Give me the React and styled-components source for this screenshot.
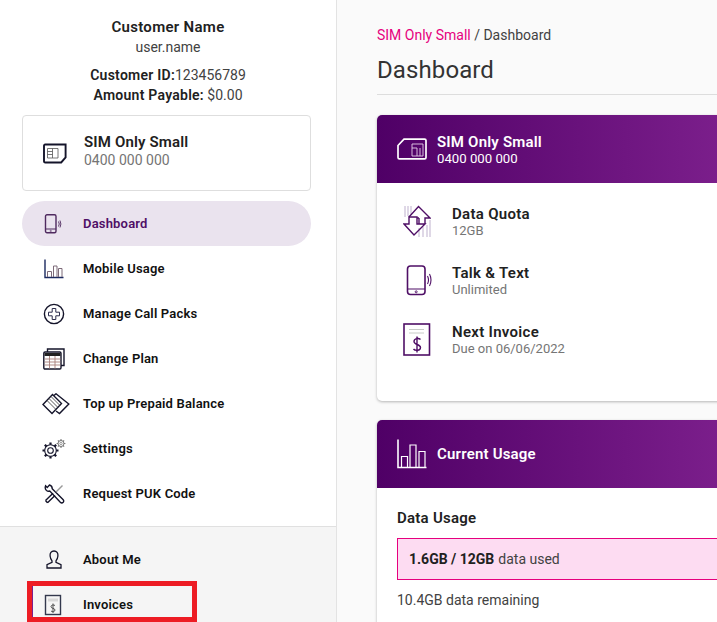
import React from "react";
import styled, { createGlobalStyle } from "styled-components";

const GlobalStyle = createGlobalStyle`
  html, body {
    margin: 0;
    padding: 0;
    height: 622px;
    overflow: hidden;
    background: #fafafa;
  }
  * {
    box-sizing: border-box;
  }
`;

const Page = styled.div`
  display: flex;
  width: 717px;
  height: 622px;
  overflow: hidden;
  position: relative;
  font-family: Roboto, "Liberation Sans", sans-serif;
  color: #212121;
`;

const Sidebar = styled.aside`
  width: 337px;
  flex-shrink: 0;
  height: 622px;
  display: flex;
  flex-direction: column;
  background: #fff;
  border-right: 1px solid #e3e3e3;
`;

const Profile = styled.div`
  flex-shrink: 0;
  padding-top: 18px;
  text-align: center;
`;

const CustomerName = styled.div`
  font-size: 15px;
  font-weight: 600;
  line-height: 18px;
  letter-spacing: 0.3px;
`;

const UserName = styled.div`
  font-size: 14px;
  line-height: 18px;
  margin-top: 2px;
  color: #424242;
`;

const Account = styled.div`
  margin-top: 9px;
  font-size: 14px;
  line-height: 20px;
  color: #424242;

  & b {
    font-weight: 600;
    letter-spacing: 0.25px;
    color: #212121;
  }
`;

const PlanCard = styled.div`
  flex-shrink: 0;
  margin: 10px 25px 0 22px;
  height: 76px;
  display: flex;
  align-items: center;
  gap: 17px;
  padding-left: 20px;
  border: 1px solid #dedede;
  border-radius: 4px;
`;

const PlanText = styled.div`
  margin-bottom: 5px;
`;

const PlanName = styled.div`
  font-size: 15px;
  font-weight: 600;
  line-height: 18px;
  letter-spacing: 0.15px;
`;

const PlanNumber = styled.div`
  margin-top: 1px;
  font-size: 14px;
  line-height: 16px;
  color: #757575;
`;

const Nav = styled.nav`
  flex-shrink: 0;
  display: flex;
  flex-direction: column;
  margin-top: 10px;
  padding: 0 25px 0 22px;
`;

const NavItem = styled.div`
  height: 45px;
  display: flex;
  align-items: center;
  padding-left: 20px;
  border-radius: 23px;
  font-size: 13px;
  font-weight: 600;
  letter-spacing: 0.18px;
  color: ${(p) => (p.$active ? "#4f0f66" : "#111")};
  background: ${(p) => (p.$active ? "#eae3ee" : "transparent")};
`;

const NavIcon = styled.span`
  width: 41px;
  height: 26px;
  flex-shrink: 0;
  display: flex;
  align-items: center;
  padding-left: ${(p) => p.$shift || 0}px;

  & svg {
    display: block;
    flex-shrink: 0;
  }
`;

const BottomNav = styled(Nav)`
  flex: 1;
  padding-top: 10px;
  background: #f5f5f5;
  border-top: 1px solid #e0e0e0;
`;

const Main = styled.main`
  flex: 1;
  min-width: 0;
  padding: 26px 0 0 40px;
  overflow: hidden;
`;

const Breadcrumb = styled.div`
  font-size: 14px;
  line-height: 18px;
  color: #424242;

  & span {
    color: #e6007e;
  }
`;

const PageTitle = styled.h1`
  margin: 10px -10px 0 0;
  padding-bottom: 8px;
  font-size: 24px;
  line-height: 32px;
  font-weight: 400;
  letter-spacing: 0.1px;
  color: #333;
  border-bottom: 1px solid #ddd;
`;

const Card = styled.section`
  flex-shrink: 0;
  margin: ${(p) => p.$top}px -10px 0 0;
  height: ${(p) => p.$height}px;
  background: #fff;
  border-radius: 5px;
  overflow: hidden;
  box-shadow: 0 1px 3px rgba(0, 0, 0, 0.28);
`;

const CardHeader = styled.header`
  height: 68px;
  display: flex;
  align-items: center;
  gap: 10px;
  padding-left: 20px;
  color: #fff;
  background: linear-gradient(90deg, #4f0066 0%, #7c1f8c 100%);
`;

const HeaderTitle = styled.div`
  font-size: 15px;
  font-weight: 600;
  line-height: 18px;
  letter-spacing: 0.2px;
`;

const HeaderSub = styled.div`
  font-size: 13.2px;
  line-height: 15px;
`;

const InfoList = styled.div`
  padding: 18px 0 0 25px;
  display: flex;
  flex-direction: column;
  gap: 19.25px;
`;

const InfoRow = styled.div`
  display: flex;
  align-items: center;
  gap: 20px;
  height: 40px;
`;

const InfoIcon = styled.span`
  width: 30px;
  flex-shrink: 0;
  display: flex;
  justify-content: center;
`;

const InfoTitle = styled.div`
  font-size: 15px;
  font-weight: 600;
  line-height: 19px;
  letter-spacing: 0.3px;
`;

const InfoSub = styled.div`
  font-size: 13px;
  line-height: 14px;
  color: #757575;
`;

const UsageBody = styled.div`
  padding: 20px 0 0 20px;
`;

const UsageTitle = styled.div`
  font-size: 15px;
  font-weight: 600;
  line-height: 20px;
  letter-spacing: 0.25px;
`;

const UsageBar = styled.div`
  margin-top: 10px;
  height: 42px;
  display: flex;
  align-items: center;
  padding-left: 11px;
  font-size: 14px;
  color: #424242;
  background: #fddcf2;
  border: 1px solid #e6007e;

  & b {
    font-weight: 700;
    color: #212121;
    margin-right: 4px;
  }
`;

const Remaining = styled.div`
  margin-top: 11px;
  font-size: 14px;
  line-height: 18px;
  color: #424242;
`;

const Highlight = styled.div`
  position: absolute;
  left: 27px;
  top: 581px;
  width: 170px;
  height: 41px;
  border: 5px solid #ed1c24;
  pointer-events: none;

  &::before {
    content: "";
    position: absolute;
    left: 0;
    top: 0;
    bottom: 0;
    width: 1px;
    background: #7c1f8c;
  }
`;

const Icon = ({ w, h, color = "#14142a", sw = 1.4, children }) => (
  <svg
    width={w}
    height={h}
    viewBox={`0 0 ${w} ${h}`}
    fill="none"
    stroke={color}
    strokeWidth={sw}
  >
    {children}
  </svg>
);

const SimIcon = () => (
  <Icon w={24} h={21}>
    <path d="M2.2 1.5H22.6V14.5L18.2 19.5H2.2Q1 19.5 1 18.3V2.7Q1 1.5 2.2 1.5Z" strokeWidth="1.9" />
    <path d="M4.5 5.5H15V15H4.5ZM4.5 8.5H9.5M4.5 11.5H9.5M9.5 5.5V15" strokeWidth=".8" stroke="#555" />
  </Icon>
);

const PhoneIcon = ({ color }) => (
  <Icon w={20} h={20} color={color}>
    <rect x="1.5" y=".8" width="10.5" height="18" rx="1.5" />
    <path d="M1.5 15H12" strokeWidth="1" />
    <circle cx="6.7" cy="17" r=".7" strokeWidth=".6" />
    <path d="M14.5 7.5Q16 10 14.5 12.5M16 6.5Q17.8 10 16 13.5" strokeWidth=".9" />
  </Icon>
);

const BarsIcon = () => (
  <Icon w={20} h={20} color="#1c2a60">
    <path d="M1 .5V18.5H19.5" />
    <path d="M3.5 18V12.5H7.5V18M9.5 18V7H13V18M14.5 18V9.5H18V18" stroke="#7d6a78" strokeWidth="1" />
  </Icon>
);

const PlusCircleIcon = () => (
  <Icon w={22} h={22}>
    <circle cx="11" cy="11" r="9.6" />
    <path d="M9.2 5.5H12.8V9.2H16.5V12.8H12.8V16.5H9.2V12.8H5.5V9.2H9.2Z" strokeWidth="1" stroke="#2c2c4c" />
  </Icon>
);

const PlanIcon = () => (
  <Icon w={22} h={22}>
    <path d="M4.5 4V1H21V17.5H18" />
    <rect x=".8" y="4" width="17.2" height="17" rx="1.2" />
    <rect x="1.5" y="5" width="16" height="3" fill="#222" stroke="none" />
    <path d="M1.5 11H17.5M1.5 14H17.5M1.5 17H17.5M6.5 8V20.5M12 8V20.5" stroke="#a8807a" strokeWidth=".9" />
  </Icon>
);

const CardsIcon = () => (
  <Icon w={28} h={22}>
    <path d="M1 11.5 10.5 1.5 19.5 10.5 10 20.5Z" />
    <path d="M12 2.5 14 .8 26.8 11 17.5 20.5 14 18" />
    <path d="M5 7.5 14 16.5M7 5.5 16 14.5M9 3.5 18 12.5" stroke="#444" strokeWidth=".9" />
  </Icon>
);

const gearTeeth = (cx, cy, inner, outer) =>
  Array.from({ length: 8 }, (_, i) => {
    const a = (i * Math.PI) / 4;
    return `M${cx + inner * Math.cos(a)} ${cy + inner * Math.sin(a)}L${cx + outer * Math.cos(a)} ${cy + outer * Math.sin(a)}`;
  }).join("");

const GearsIcon = () => (
  <Icon w={24} h={20} sw={1.1}>
    <circle cx="8.5" cy="11.5" r="5.8" />
    <circle cx="8.5" cy="11.5" r="2.8" />
    <path d={gearTeeth(8.5, 11.5, 5.8, 8)} strokeWidth="2.2" />
    <circle cx="19" cy="4.5" r="3" stroke="#777" strokeWidth="1" />
    <circle cx="19" cy="4.5" r="1.2" stroke="#777" strokeWidth=".7" />
    <path d={gearTeeth(19, 4.5, 2.8, 4.4)} stroke="#777" strokeWidth="1.1" />
  </Icon>
);

const ToolsIcon = () => (
  <Icon w={21} h={20}>
    <path d="M5.5 1 3.2 3.4 1.6 1.8Q.5 4.8 2.5 6.5 4 7.6 5.8 7L16.3 18.2Q17.8 19.6 19.2 18.2 20.3 16.8 19 15.5L8.2 4.8Q8.4 2 5.5 1Z" />
    <path d="M1.5 16.5 9 9.3M3.5 18.8 11 11.5M1.5 16.5 3.5 18.8" />
    <path d="M12 8 18.5 1.5" stroke="#999" strokeWidth="1.4" />
  </Icon>
);

const PersonIcon = () => (
  <Icon w={16} h={19} sw={1.3}>
    <path d="M8 1C5.2 1 3.8 3.3 4.1 6 4.3 8.5 5.3 9.8 6 10.8V12.4L1 14.6V18H15V14.6L10 12.4V10.8C10.7 9.8 11.7 8.5 11.9 6 12.2 3.3 10.8 1 8 1Z" />
  </Icon>
);

const InvoiceSmallIcon = () => (
  <Icon w={18} h={22} color="#33384d">
    <rect x="1.5" y="1.5" width="15" height="19" />
    <path d="M4 6H14" stroke="#d8d8d8" strokeWidth="3" />
    <path d="M11 11.5C10 10.7 7 10.7 7 12.7 7 14.7 11 14 11 16 11 18 8 18 7 17M9 9.5V19" strokeWidth=".9" stroke="#444" />
  </Icon>
);

const HeaderSimIcon = () => (
  <Icon w={30} h={22} color="#fff" sw={1.7}>
    <path d="M7 1.2H27.6Q29 1.2 29 2.6V19.4Q29 20.8 27.6 20.8H2.4Q1 20.8 1 19.4V7.5Z" />
    <path d="M15 6H26V18H15ZM15 10H20M20 10V18M23 10V18" strokeWidth=".9" stroke="#e6d0ea" />
  </Icon>
);

const HeaderBarsIcon = () => (
  <Icon w={30} h={30} color="#fff" sw={1.2}>
    <path d="M1 .5V28.5H29.5" strokeWidth="1.6" />
    <path d="M4.5 28V17.5H10.5V28M13 28V6H19V28M22 28V12.5H28V28" />
  </Icon>
);

const QuotaIcon = () => (
  <Icon w={28} h={33} color="#4f0f66" sw={1.4}>
    <path d="M2 1V12M5 1V11M8 1V9M16 23V32M20 22V32M24 20V32M27 15V32" stroke="#b8a8c8" strokeWidth=".9" />
    <path d="M6 12H14V19H22L11 30 1 19H6Z" />
    <path d="M16 19V13M22 19V13H27L15.5 1.5 6 12" />
    <path d="M16 13H14" />
  </Icon>
);

const TalkIcon = () => (
  <Icon w={30} h={31} color="#4f0f66" sw={1.6}>
    <rect x="5.5" y="1" width="17.5" height="28.5" rx="3" />
    <path d="M5.5 24H23" strokeWidth="1.1" />
    <circle cx="14.2" cy="26.8" r="1" strokeWidth=".9" />
    <path d="M25.5 11Q27.5 15 25.5 19M27.5 9Q30.5 15 27.5 21" strokeWidth="1.1" />
  </Icon>
);

const InvoiceIcon = () => (
  <Icon w={28} h={34} color="#4f0f66" sw={1.6}>
    <rect x="1" y="1" width="25.5" height="31" />
    <path d="M6 6.5H21M6 10H21" stroke="#c8ccc8" strokeWidth="1" />
    <path d="M17.5 16.5C16 15 11 15 11 18.5 11 22 17.5 21 17.5 24.5 17.5 28 12 28 10.5 26M14 13.5V29.5" strokeWidth="1.4" />
  </Icon>
);

const navItems = [
  { label: "Dashboard", icon: <PhoneIcon color="#4f2a5f" />, active: true, shift: 2 },
  { label: "Mobile Usage", icon: <BarsIcon />, shift: 2 },
  { label: "Manage Call Packs", icon: <PlusCircleIcon />, shift: 1 },
  { label: "Change Plan", icon: <PlanIcon />, shift: 1 },
  { label: "Top up Prepaid Balance", icon: <CardsIcon /> },
  { label: "Settings", icon: <GearsIcon /> },
  { label: "Request PUK Code", icon: <ToolsIcon />, shift: 2 },
];

const bottomItems = [
  { label: "About Me", icon: <PersonIcon />, shift: 4 },
  { label: "Invoices", icon: <InvoiceSmallIcon />, shift: 2 },
];

const infoItems = [
  { title: "Data Quota", sub: "12GB", icon: <QuotaIcon /> },
  { title: "Talk & Text", sub: "Unlimited", icon: <TalkIcon /> },
  { title: "Next Invoice", sub: "Due on 06/06/2022", icon: <InvoiceIcon /> },
];

export default function App() {
  return (
    <Page>
      <GlobalStyle />
      <Sidebar>
        <Profile>
          <CustomerName>Customer Name</CustomerName>
          <UserName>user.name</UserName>
          <Account>
            <div>
              <b>Customer ID:</b>123456789
            </div>
            <div>
              <b>Amount Payable:</b> $0.00
            </div>
          </Account>
        </Profile>
        <PlanCard>
          <SimIcon />
          <PlanText>
            <PlanName>SIM Only Small</PlanName>
            <PlanNumber>0400 000 000</PlanNumber>
          </PlanText>
        </PlanCard>
        <Nav>
          {navItems.map((item) => (
            <NavItem key={item.label} $active={item.active}>
              <NavIcon $shift={item.shift}>{item.icon}</NavIcon>
              {item.label}
            </NavItem>
          ))}
        </Nav>
        <BottomNav>
          {bottomItems.map((item) => (
            <NavItem key={item.label}>
              <NavIcon $shift={item.shift}>{item.icon}</NavIcon>
              {item.label}
            </NavItem>
          ))}
        </BottomNav>
      </Sidebar>
      <Main>
        <Breadcrumb>
          <span>SIM Only Small</span> / Dashboard
        </Breadcrumb>
        <PageTitle>Dashboard</PageTitle>
        <Card $top={20} $height={286}>
          <CardHeader>
            <HeaderSimIcon />
            <div>
              <HeaderTitle>SIM Only Small</HeaderTitle>
              <HeaderSub>0400 000 000</HeaderSub>
            </div>
          </CardHeader>
          <InfoList>
            {infoItems.map((item) => (
              <InfoRow key={item.title}>
                <InfoIcon>{item.icon}</InfoIcon>
                <div>
                  <InfoTitle>{item.title}</InfoTitle>
                  <InfoSub>{item.sub}</InfoSub>
                </div>
              </InfoRow>
            ))}
          </InfoList>
        </Card>
        <Card $top={19} $height={300}>
          <CardHeader>
            <HeaderBarsIcon />
            <HeaderTitle>Current Usage</HeaderTitle>
          </CardHeader>
          <UsageBody>
            <UsageTitle>Data Usage</UsageTitle>
            <UsageBar>
              <b>1.6GB / 12GB</b> data used
            </UsageBar>
            <Remaining>10.4GB data remaining</Remaining>
          </UsageBody>
        </Card>
      </Main>
      <Highlight />
    </Page>
  );
}
